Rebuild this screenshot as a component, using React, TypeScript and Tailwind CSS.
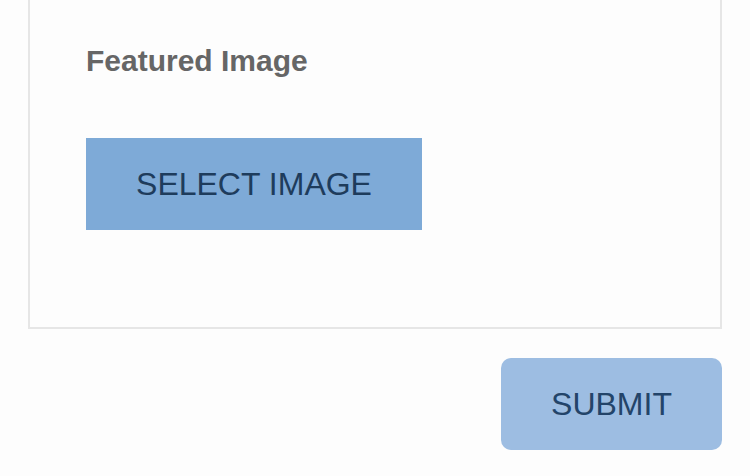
export default function App() {
  return (
    <div className="h-[476px] w-[750px] overflow-hidden bg-[#fdfdfd] px-[28px] font-['Liberation_Sans',Arial,sans-serif]">
      {/* Image panel (top edge is scrolled off) */}
      <div className="border-2 border-t-0 border-[#e6e6e6] pl-[56px] pt-[46px] pb-[97px]">
        <h2 className="text-[30px] font-bold leading-none text-[#666666]">Featured Image</h2>
        <button
          type="button"
          className="mt-[62px] flex h-[92px] w-[336px] items-center justify-center bg-[#7eaad7] text-[32px] leading-none text-[#1e3c5c]"
        >
          SELECT IMAGE
        </button>
      </div>

      <div className="mt-[29px] flex justify-end">
        <button
          type="button"
          className="flex h-[92px] w-[221px] items-center justify-center rounded-[10px] bg-[#9dbde2] text-[32px] leading-none text-[#234469]"
        >
          SUBMIT
        </button>
      </div>
    </div>
  );
}
